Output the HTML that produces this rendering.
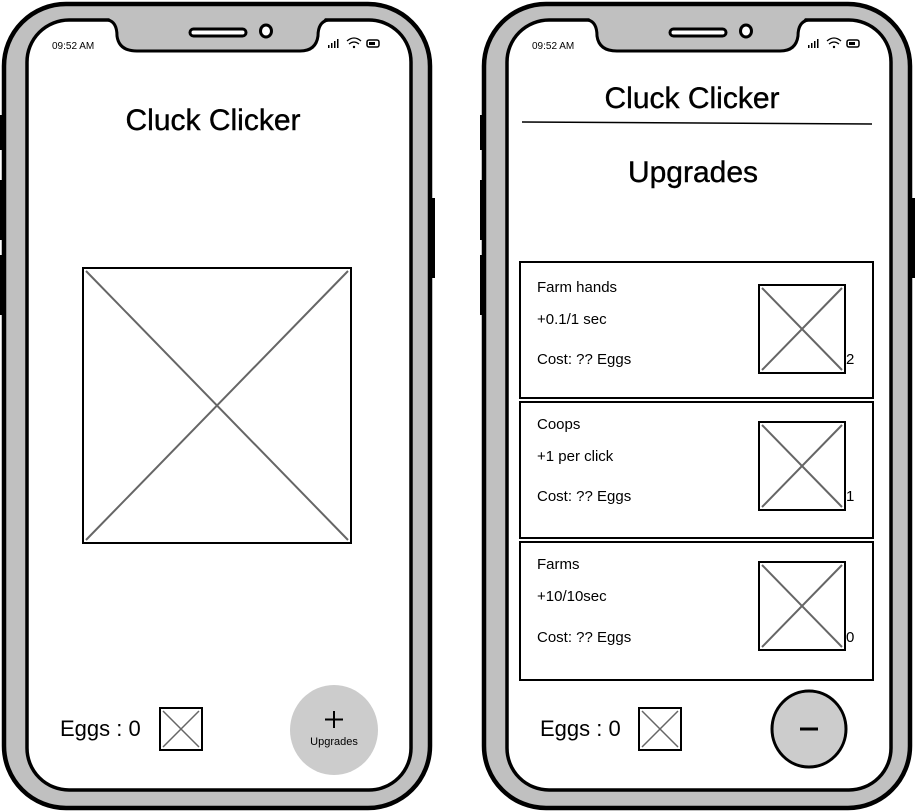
<!DOCTYPE html>
<html><head><meta charset="utf-8"><style>
html,body{margin:0;padding:0;background:#fff;}
svg{display:block;font-family:"Liberation Sans",sans-serif;}
</style></head><body>
<svg width="915" height="812" viewBox="0 0 915 812" xmlns="http://www.w3.org/2000/svg">
<defs>
<g id="phone">
  <rect x="0" y="115" width="5" height="35" fill="#000"/>
  <rect x="0" y="180" width="5" height="60" fill="#000"/>
  <rect x="0" y="255" width="5" height="60" fill="#000"/>
  <rect x="429" y="198" width="6" height="80" fill="#000"/>
  <rect x="4" y="4" width="426" height="804" rx="62" fill="#c0c0c0" stroke="#000" stroke-width="4.5"/>
  <rect x="27" y="20" width="384" height="770" rx="42" fill="#fff" stroke="#000" stroke-width="3.5"/>
  <path d="M108,17 L326,17 L322,22 Q318,24 318,36 Q316,51 300,51 L137,51 Q119,51 117,36 Q117,24 113,22 Z" fill="#c0c0c0"/>
  <path d="M108,20 Q117,22 117,36 Q119,51 137,51 L300,51 Q316,51 318,36 Q318,22 328,20" fill="none" stroke="#000" stroke-width="3"/>
  <rect x="190" y="29" width="56" height="7" rx="3.5" fill="#fff" stroke="#000" stroke-width="3"/>
  <ellipse cx="266" cy="31" rx="5.5" ry="6" fill="#fff" stroke="#000" stroke-width="3"/>
  <text x="52" y="49" font-size="10" fill="#000">09:52 AM</text>
  <g fill="#000">
    <rect x="328" y="45" width="1.5" height="3"/><rect x="331" y="43" width="1.5" height="5"/><rect x="334" y="41" width="1.5" height="7"/><rect x="337" y="39" width="1.5" height="9"/>
  </g>
  <path d="M347,41 Q354,35 361,41 M349,44 Q354,40 359,44" fill="none" stroke="#000" stroke-width="1.3"/>
  <circle cx="354" cy="47" r="1.2" fill="#000"/>
  <rect x="367" y="40" width="12" height="7" rx="2" fill="none" stroke="#000" stroke-width="1.5"/>
  <rect x="369" y="42" width="6" height="3" fill="#000"/>
</g>
</defs>

<use href="#phone"/>
<use href="#phone" transform="translate(480,0)"/>

<!-- LEFT -->
<text x="213" y="130" font-size="30" text-anchor="middle" stroke="#000" stroke-width="0.4">Cluck Clicker</text>
<rect x="83" y="268" width="268" height="275" fill="#fff" stroke="#000" stroke-width="2"/>
<path d="M86,271 L348,540 M348,271 L86,540" stroke="#666" stroke-width="2"/>
<text x="60" y="736" font-size="22">Eggs : 0</text>
<rect x="160" y="708" width="42" height="42" fill="#fff" stroke="#000" stroke-width="2"/>
<path d="M163,711 L199,747 M199,711 L163,747" stroke="#666" stroke-width="1.5"/>
<ellipse cx="334" cy="730" rx="44" ry="45" fill="#cccccc"/>
<path d="M334,711 V728 M325,719.5 H343" stroke="#000" stroke-width="2"/>
<text x="334" y="745" font-size="11" text-anchor="middle">Upgrades</text>

<!-- RIGHT -->
<text x="692" y="108" font-size="30" text-anchor="middle" stroke="#000" stroke-width="0.4">Cluck Clicker</text>
<path d="M522,122 L872,124" stroke="#000" stroke-width="1.5"/>
<text x="693" y="182" font-size="30" text-anchor="middle" stroke="#000" stroke-width="0.4">Upgrades</text>

<g>
  <rect x="520" y="262" width="353" height="136" fill="#fff" stroke="#000" stroke-width="2"/>
  <text x="537" y="292" font-size="15">Farm hands</text>
  <text x="537" y="324" font-size="15">+0.1/1 sec</text>
  <text x="537" y="364" font-size="15">Cost: ?? Eggs</text>
  <rect x="759" y="285" width="86" height="88" fill="#fff" stroke="#000" stroke-width="2"/>
  <path d="M762,288 L842,370 M842,288 L762,370" stroke="#666" stroke-width="2"/>
  <text x="846" y="364" font-size="15">2</text>
</g>
<g transform="translate(0,140)">
  <rect x="520" y="262" width="353" height="136" fill="#fff" stroke="#000" stroke-width="2"/>
  <text x="537" y="289" font-size="15">Coops</text>
  <text x="537" y="321" font-size="15">+1 per click</text>
  <text x="537" y="361" font-size="15">Cost: ?? Eggs</text>
  <rect x="759" y="282" width="86" height="88" fill="#fff" stroke="#000" stroke-width="2"/>
  <path d="M762,285 L842,367 M842,285 L762,367" stroke="#666" stroke-width="2"/>
  <text x="846" y="361" font-size="15">1</text>
</g>
<g transform="translate(0,280)">
  <rect x="520" y="262" width="353" height="138" fill="#fff" stroke="#000" stroke-width="2"/>
  <text x="537" y="289" font-size="15">Farms</text>
  <text x="537" y="321" font-size="15">+10/10sec</text>
  <text x="537" y="362" font-size="15">Cost: ?? Eggs</text>
  <rect x="759" y="282" width="86" height="88" fill="#fff" stroke="#000" stroke-width="2"/>
  <path d="M762,285 L842,367 M842,285 L762,367" stroke="#666" stroke-width="2"/>
  <text x="846" y="362" font-size="15">0</text>
</g>

<text x="540" y="736" font-size="22">Eggs : 0</text>
<rect x="639" y="708" width="42" height="42" fill="#fff" stroke="#000" stroke-width="2"/>
<path d="M642,711 L678,747 M678,711 L642,747" stroke="#666" stroke-width="1.5"/>
<ellipse cx="809" cy="729" rx="37" ry="38" fill="#cccccc" stroke="#000" stroke-width="3"/>
<path d="M800,729 H818" stroke="#000" stroke-width="3"/>
</svg>
</body></html>
